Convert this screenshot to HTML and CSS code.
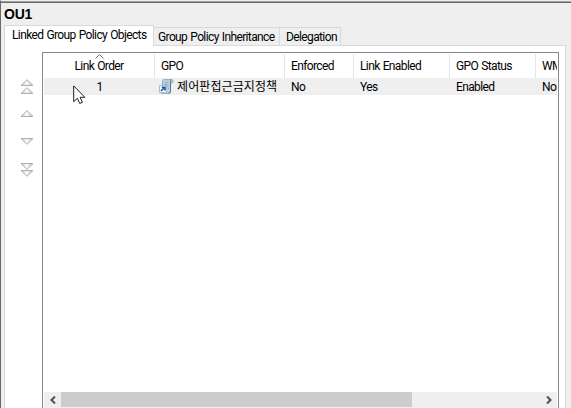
FILE: index.html
```
<!DOCTYPE html>
<html lang="en">
<head>
<meta charset="utf-8">
<title>OU1</title>
<link rel="stylesheet" href="styles.css">
</head>
<body>
<svg class="defs" width="0" height="0">
  <defs>
    <linearGradient id="metal" x1="0" x2="1" y1="0" y2="0"><stop offset="0" stop-color="#ccc"/><stop offset=".5" stop-color="#fafafa"/><stop offset="1" stop-color="#bbb"/></linearGradient>
    <path id="up" d="M1 6.500L7 .7l6 5.800z" fill="url(#metal)" stroke="#acacac"/>
    <path id="down" d="M1 .5L7 6.300 13 .5z" fill="url(#metal)" stroke="#acacac"/>
  </defs>
</svg>
<main class="window">
  <h1 class="title">OU1</h1>
  <nav class="tabs">
    <span class="tab active">Linked Group Policy Objects</span>
    <span class="tab inherit">Group Policy Inheritance</span>
    <span class="tab deleg">Delegation</span>
  </nav>
  <section class="panel">
    <div class="order-buttons">
      <svg width="14" height="16"><use href="#up"/><use href="#up" y="8"/></svg>
      <svg width="14" height="8"><use href="#up"/></svg>
      <svg width="14" height="8"><use href="#down"/></svg>
      <svg width="14" height="16"><use href="#down"/><use href="#down" y="7"/></svg>
    </div>
    <div class="list">
      <div class="row head">
        <span class="cell center"><svg class="sort" width="9" height="5"><path d="M.5 4.500l4-4 4 4" fill="none" stroke="#6d6d6d"/></svg>Link Order</span>
        <span class="cell">GPO</span>
        <span class="cell">Enforced</span>
        <span class="cell">Link Enabled</span>
        <span class="cell">GPO Status</span>
        <span class="cell">WMI</span>
      </div>
      <div class="row item">
        <span class="cell center">1</span>
        <span class="cell gpo"><svg width="15" height="15" viewBox="0 0 15 15">
          <path d="M4.500.7h8.300c1.500 0 1.700 2.800.2 3.100h-1.500v8.200c0 1.500-.7 2.300-2 2.300H2.800c-1.500 0-1.800-1.700-.8-2.500h1.500V2.500c0-1 .3-1.600 1-1.800z" fill="#bdd3e2" stroke="#8ba6b9"/>
          <path d="M11.500 3.800V2.200c0-.8.500-1.500 1.200-1.500M11.500 4v8c0 1.500-.7 2.300-2 2.300" fill="none" stroke="#56788f"/>
          <path d="M5.500 3.500h4M5.500 5.500h4M8 7.500h2M9 9.500h1" stroke="#8daac0"/>
          <path d="M.5 6.500h7v7h-7z" fill="#f4f9ff" stroke="#a6bdd6"/>
          <path d="M2 12l3.500-3.500M2.800 8.300H6v3.200" fill="none" stroke="#2456a8" stroke-width="1.600"/>
        </svg><span class="korean">제어판접근금지정책</span></span>
        <span class="cell">No</span>
        <span class="cell">Yes</span>
        <span class="cell">Enabled</span>
        <span class="cell">None</span>
      </div>
      <div class="space"></div>
      <div class="scrollbar">
        <span class="arrow"><svg width="6" height="8"><path d="M5 .5L1.500 4 5 7.500" fill="none" stroke="#505050" stroke-width="2"/></svg></span>
        <span class="thumb"></span>
        <span class="arrow end"><svg width="6" height="8"><path d="M1 .5L4.500 4 1 7.500" fill="none" stroke="#505050" stroke-width="2"/></svg></span>
      </div>
    </div>
  </section>
  <svg class="cursor" width="13" height="21"><path d="M.7.9v15.800l3.700-3.400 2.300 5.200 2.700-1.200-2.300-5h4.800z" fill="#fff" stroke="#1b1b26"/></svg>
</main>
</body>
</html>
```
FILE: styles.css
```
* { box-sizing: border-box; }
body {
  margin: 0;
  overflow: hidden;
  background: #efefef;
  color: #000;
  font: 12px/16px Roboto, "Noto Sans CJK KR", sans-serif;
  letter-spacing: -.62px;
  word-spacing: .7px;
}
svg { display: block; flex: none; }
.defs { position: absolute; }
.window {
  position: relative;
  display: flex;
  flex-direction: column;
  width: 571px;
  height: 408px;
  overflow: hidden;
  border-left: 1px solid #696969;
  border-top: 1px solid #efefef;
  box-shadow: inset 0 1px #a0a0a0, inset 0 2px #696969;
}
.title {
  height: 24px;
  margin: 0;
  padding: 5px 0 0 3px;
  font: bold 14px/16px "Liberation Sans", sans-serif;
  letter-spacing: -.2px;
}
.tabs {
  position: relative;
  z-index: 1;
  display: flex;
  align-items: flex-end;
  height: 21px;
  padding-left: 3px;
}
.tab {
  height: 19px;
  border: 1px solid #d9d9d9;
  border-left: 0;
  padding-top: 1px;
  white-space: nowrap;
}
.tab.active {
  width: 150px;
  height: 21px;
  border-left: 1px solid #d9d9d9;
  border-bottom: 0;
  padding: 1px 0 0 7px;
  background: #fff;
}
.inherit { width: 126px; padding-left: 4px; }
.deleg { width: 61px; padding-left: 6px; }
.panel {
  display: flex;
  flex: 1;
  width: 562px;
  margin: -1px 0 0 3px;
  border: 1px solid #d9d9d9;
  border-bottom: 0;
  background: #fff;
}
.order-buttons {
  display: flex;
  flex-direction: column;
  width: 37px;
  padding: 33px 0 0 15px;
}
.order-buttons svg { margin-bottom: 15px; }
.order-buttons svg:nth-child(2) { margin-bottom: 20px; }
.order-buttons svg:nth-child(3) { margin-bottom: 17px; }
.list {
  display: flex;
  flex-direction: column;
  width: 517px;
  margin-top: 6px;
  padding: 1px 1px 0;
  border: 1px solid #828790;
  border-bottom: 0;
}
.row {
  display: grid;
  grid-template-columns: 111px 130px 69px 96px 86px 21px;
  overflow: hidden;
  white-space: nowrap;
}
.head { height: 24px; }
.item { height: 17px; background: #efefef; }
.cell { position: relative; overflow: hidden; padding-left: 6px; }
.center { padding: 0; text-align: center; }
.head .cell { padding-top: 4px; border-right: 1px solid #e5e5e5; }
.head .cell:last-child { border: 0; }
.item .cell { padding-top: 1px; }
.sort { position: absolute; left: 51px; top: 0; }
.item .gpo { display: flex; padding: 0 0 0 4px; gap: 3px; }
.item .gpo svg { margin-top: 1px; }
.korean { font: 12px/16px "Noto Sans CJK KR", sans-serif; letter-spacing: .1px; }
.space { flex: 1; }
.scrollbar { display: flex; height: 16px; background: #efefef; }
.arrow { display: flex; align-items: center; justify-content: center; width: 17px; height: 15px; }
.thumb { width: 351px; height: 15px; background: #cdcdcd; }
.end { margin-left: auto; }
.cursor { position: absolute; left: 72px; top: 84px; }
```
